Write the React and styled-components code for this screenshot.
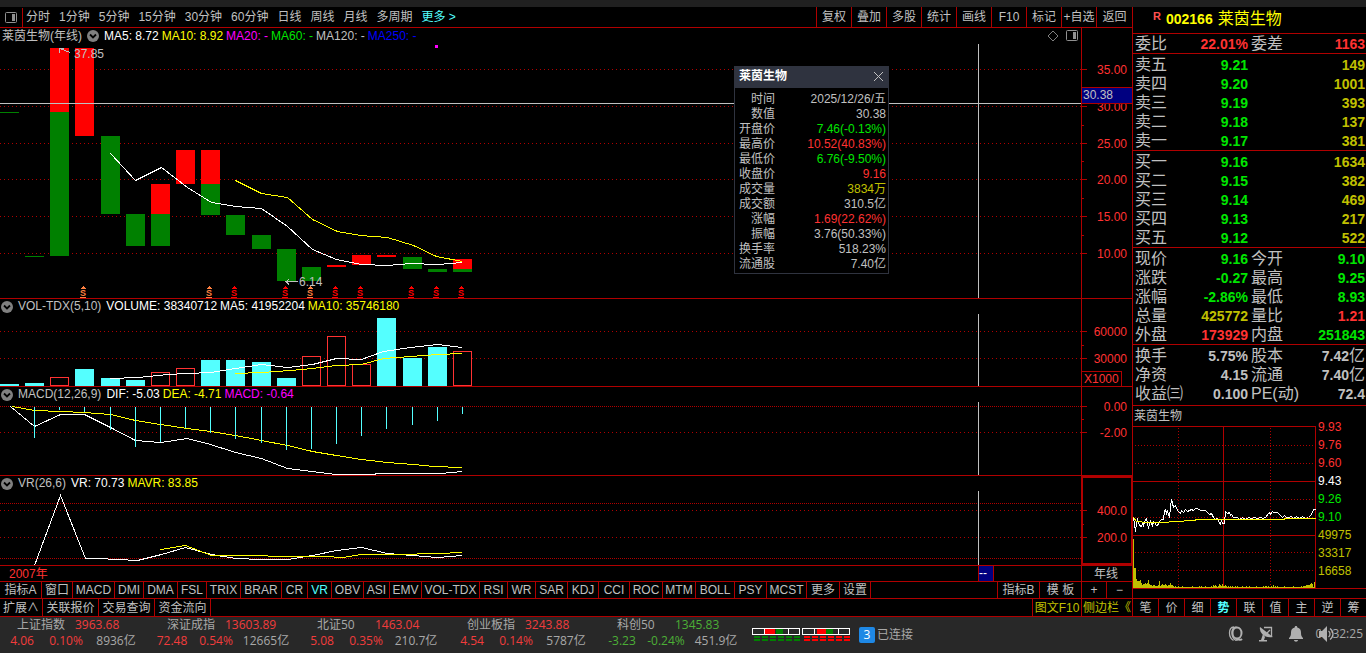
import React from 'react';
import styled, { createGlobalStyle, css } from 'styled-components';

const colors = {
  line: '#b00000',
  red: '#ff3232',
  green: '#00e600',
  grey: '#c0c0c0',
  olive: '#c0c000',
  yellow: '#ffff00',
  cyan: '#54ffff',
  white: '#ffffff',
  magenta: '#ff00ff',
};

const GlobalStyle = createGlobalStyle`
  * {
    box-sizing: border-box;
  }

  body {
    margin: 0;
    background: #000;
    color: ${colors.grey};
    font-family: "Liberation Sans", "Noto Sans CJK SC", sans-serif;
    font-size: 12px;
  }

  button {
    margin: 0;
    padding: 0;
    border: none;
    background: none;
    color: inherit;
    font: inherit;
    white-space: nowrap;
    cursor: pointer;
  }
`;

const Page = styled.div`
  display: flex;
  flex-direction: column;
  min-height: 100vh;
`;

const TopStrip = styled.div`
  height: 7px;
  background: #202020;
`;

const Body = styled.div`
  display: flex;
  flex: 1;
`;

const Main = styled.main`
  flex: 1;
  min-width: 0;
`;

const Bar = styled.div`
  display: flex;
  height: ${({ $height }) => $height}px;
  border-bottom: 1px solid ${colors.line};
  white-space: nowrap;
`;

const Spacer = styled.div`
  flex: 1;
`;

const LayoutButton = styled.button`
  display: flex;
  align-items: center;
  justify-content: center;
  width: 23px;
  margin-top: 1px;
  border-right: 1px solid ${colors.line};
`;

const Periods = styled.nav`
  display: flex;
  gap: 9px;
  padding-left: 3px;

  button {
    line-height: 20px;
  }
`;

const MoreButton = styled.button`
  color: ${colors.cyan};
`;

const Tools = styled.div`
  display: flex;

  button {
    width: 35px;
    line-height: 20px;
    border-left: 1px solid ${colors.line};
  }

  button:last-child {
    width: 36px;
  }
`;

const ChartRow = styled.section`
  display: flex;
  position: relative;
  border-bottom: 1px solid ${colors.line};
`;

const ChartArea = styled.div`
  flex: 1;
  min-width: 0;
`;

const ChartHeader = styled.div`
  display: flex;
  align-items: center;
  gap: 3px;
  height: ${({ $height }) => $height || 15}px;
  padding-left: ${({ $inset }) => $inset || 1}px;
  padding-right: 3px;
  line-height: 15px;
  white-space: nowrap;
`;

const ChartName = styled.span`
  margin-right: 2px;
`;

const Fold = styled.button`
  display: flex;
  margin-right: 2px;
`;

const Reading = styled.span`
  color: ${({ $color }) => $color};
`;

const Plot = styled.svg`
  display: block;
  width: 100%;
  height: ${({ $height }) => $height}px;
  shape-rendering: crispEdges;
`;

const Axis = styled.svg`
  display: block;
  flex: none;
  width: 51px;
  height: ${({ $height }) => $height}px;
  shape-rendering: crispEdges;
  overflow: visible;
`;

const HeaderIcons = styled.div`
  display: flex;
  gap: 7px;
  margin-left: auto;
`;

const Popup = styled.aside`
  position: absolute;
  left: 734px;
  top: 38px;
  width: 155px;
  border: 1px solid #2f333f;
  background: #000;
`;

const PopupTitle = styled.header`
  display: flex;
  align-items: center;
  justify-content: space-between;
  height: 21px;
  padding: 0 4px 3px;
  background: #2f333f;
  color: ${colors.white};
  font-weight: bold;
  line-height: 16px;
`;

const CloseButton = styled.button`
  display: flex;
`;

const PopupTable = styled.table`
  width: 100%;
  margin: 4px 0 1px;
  border-collapse: collapse;
  line-height: 15px;

  th,
  td {
    height: 15px;
    padding: 0 2px 0 0;
    text-align: right;
    font-weight: normal;
    white-space: nowrap;
  }

  th {
    width: 40px;
    padding: 0;
  }
`;

const Tab = styled.button`
  width: ${({ $width }) => $width}px;
  border-right: 1px solid ${colors.line};
  color: ${({ $color }) => $color || 'inherit'};
  line-height: 16px;
`;

const SideTab = styled.button`
  width: ${({ $width }) => $width}px;
  border-left: 1px solid ${colors.line};
  color: ${({ $color }) => $color || 'inherit'};
  line-height: 16px;
`;

const Side = styled.aside`
  display: flex;
  flex-direction: column;
  flex: none;
  width: 234px;
  border-left: 1px solid ${colors.line};
`;

const StockTitle = styled.h1`
  display: flex;
  align-items: center;
  gap: 5px;
  height: 26px;
  margin: 0;
  padding: 0 0 2px 20px;
  color: ${colors.yellow};
  font-size: 16px;
  font-weight: normal;
  line-height: 24px;

  sup {
    align-self: flex-start;
    margin-top: 3px;
    color: #ff5050;
    font-size: 11px;
    font-weight: bold;
    line-height: 12px;
  }

  b {
    font-size: 14px;
  }
`;

const QuoteTable = styled.table`
  width: 100%;
  table-layout: fixed;
  border-collapse: collapse;

  th,
  td {
    height: 19px;
    padding: 0;
    line-height: 16px;
    white-space: nowrap;
  }

  th {
    width: 50px;
    padding-left: 2px;
    font-size: 16px;
    font-weight: normal;
    text-align: left;
  }

  td {
    padding-right: 1px;
    font-size: 14px;
    font-weight: bold;
    text-align: right;
  }

  th + td {
    width: 66px;
  }

  td:last-child {
    width: auto;
  }
`;

const QuoteBlock = styled.div`
  padding: ${({ $pad }) => $pad || '1px 0 0'};
  border-top: 1px solid ${colors.line};
`;

const Value = styled.td`
  color: ${({ $color }) => $color};

  small {
    font-size: 16px;
    font-weight: normal;
    line-height: 14px;
  }
`;

const MiniTitle = styled.h2`
  height: 21px;
  margin: 0;
  padding-left: 1px;
  border-top: 1px solid ${colors.line};
  font-size: 12px;
  font-weight: normal;
  line-height: 20px;
`;

const MiniPlot = styled.svg`
  display: block;
  width: 100%;
  height: 172px;
  overflow: visible;
  shape-rendering: crispEdges;
`;

const SideTabs = styled.nav`
  display: flex;
  height: 19px;
  border: solid ${colors.line};
  border-width: 1px 0;

  button {
    flex: 1;
    border-right: 1px solid ${colors.line};
  }

  button:last-child {
    border-right: none;
  }
`;

const SideTabButton = styled.button`
  line-height: 16px;
  ${({ $active }) =>
    $active &&
    css`
      color: ${colors.cyan};
      font-weight: bold;
    `}
`;

const Footer = styled.footer`
  display: flex;
  align-items: center;
  height: 36px;
  background: #282828;
  color: #a8a8a8;
  font-family: "Open Sans", "Noto Sans CJK SC", sans-serif;
  white-space: nowrap;
`;

const IndexCard = styled.div`
  width: 150px;
  padding-bottom: 4px;
  line-height: 16px;
`;

const IndexName = styled.div`
  display: grid;
  grid-template-columns: 58px 1fr;
  height: 16px;
  padding-left: 17px;
`;

const IndexChange = styled.div`
  display: grid;
  grid-template-columns: 44px 44px 56px;
  height: 16px;
  text-align: center;
`;

const Trend = styled.span`
  color: ${({ $up }) => ($up ? '#f23c3c' : '#4caf36')};
`;

const Meters = styled.svg`
  flex: none;
  width: 99px;
  height: 14px;
  margin-left: 2px;
  shape-rendering: crispEdges;
`;

const Connection = styled.div`
  display: flex;
  align-items: center;
  gap: 2px;
  margin-left: 8px;
  line-height: 16px;

  b {
    width: 16px;
    border-radius: 2px;
    background: #1e88e5;
    color: ${colors.white};
    font-weight: normal;
    text-align: center;
  }
`;

const StatusIcons = styled.div`
  display: flex;
  align-items: center;
  gap: 14px;
  margin-left: auto;
  padding: 0 3px 2px 0;

  button {
    display: flex;
  }
`;

const Clock = styled.div`
  position: relative;
  margin-left: -2px;
  line-height: 16px;

  button {
    position: absolute;
    left: 2px;
    top: 0;
  }
`;

const periods = ['分时', '1分钟', '5分钟', '15分钟', '30分钟', '60分钟', '日线', '周线', '月线', '多周期'];
const tools = ['复权', '叠加', '多股', '统计', '画线', 'F10', '标记', '+自选', '返回'];
const indicators = [
  ['指标A', 42], ['窗口', 31], ['MACD', 42], ['DMI', 29], ['DMA', 34], ['FSL', 29], ['TRIX', 34],
  ['BRAR', 41], ['CR', 26], ['VR', 24], ['OBV', 32], ['ASI', 26], ['EMV', 32], ['VOL-TDX', 58],
  ['RSI', 28], ['WR', 28], ['SAR', 32], ['KDJ', 31], ['CCI', 31], ['ROC', 33], ['MTM', 33],
  ['BOLL', 39], ['PSY', 32], ['MCST', 40], ['更多', 33], ['设置', 31],
];

// x, top, bottom, colour
const candles = [
  [0, 68, 69, 'g'], [25, 212, 213, 'g'], [50, 4, 68, 'r'], [50, 68, 212, 'g'], [75, 4, 92, 'r'],
  [101, 92, 170, 'g'], [126, 170, 202, 'g'], [151, 140, 170, 'r'], [151, 170, 202, 'g'],
  [176, 106, 140, 'r'], [201, 106, 140, 'r'], [201, 140, 171, 'g'], [226, 171, 191, 'g'],
  [252, 191, 205, 'g'], [277, 205, 237, 'g'], [302, 223, 237, 'g'], [327, 221, 223, 'r'],
  [352, 211, 221, 'r'], [377, 211, 213, 'r'], [403, 213, 225, 'g'], [428, 225, 228, 'g'],
  [453, 215, 225, 'r'], [453, 225, 228, 'g'],
];

const signals = [
  [83, '#ff8040'], [209, '#ff8040'], [234, '#ff0000'], [285, '#ff0000'], [310, '#ff8040'],
  [335, '#ff0000'], [360, '#ff0000'], [411, '#ff0000'], [436, '#ff0000'], [461, '#ff0000'],
];

// x, top, rising
const volumes = [
  [0, 70, 0], [25, 69, 0], [50, 63, 1], [75, 55, 0], [101, 64, 0], [126, 66, 0], [151, 58, 1],
  [176, 54, 1], [201, 46, 0], [226, 46, 0], [252, 48, 0], [277, 64, 0], [302, 42, 1], [327, 22, 1],
  [352, 50, 1], [377, 4, 0], [403, 44, 0], [428, 33, 0], [453, 37, 1],
];

const macdBars = [
  [34, 36], [59, 8], [84, 10], [110, 28], [135, 45], [160, 40], [185, 26], [210, 31], [235, 37],
  [261, 41], [286, 48], [311, 47], [336, 42], [361, 34], [386, 27], [412, 23], [437, 19], [462, 12],
];

const popupRows = [
  ['时间', '2025/12/26/五'],
  ['数值', '30.38'],
  ['开盘价', '7.46(-0.13%)', colors.green],
  ['最高价', '10.52(40.83%)', colors.red],
  ['最低价', '6.76(-9.50%)', colors.green],
  ['收盘价', '9.16', colors.red],
  ['成交量', '3834万', colors.olive],
  ['成交额', '310.5亿'],
  ['涨幅', '1.69(22.62%)', colors.red],
  ['振幅', '3.76(50.33%)'],
  ['换手率', '518.23%'],
  ['流通股', '7.40亿'],
];

const asks = [
  ['卖五', '9.21', '149'], ['卖四', '9.20', '1001'], ['卖三', '9.19', '393'],
  ['卖二', '9.18', '137'], ['卖一', '9.17', '381'],
];
const bids = [
  ['买一', '9.16', '1634'], ['买二', '9.15', '382'], ['买三', '9.14', '469'],
  ['买四', '9.13', '217'], ['买五', '9.12', '522'],
];

const quotes = [
  ['现价', '9.16', colors.green, '今开', '9.10', colors.green],
  ['涨跌', '-0.27', colors.green, '最高', '9.25', colors.green],
  ['涨幅', '-2.86%', colors.green, '最低', '8.93', colors.green],
  ['总量', '425772', colors.olive, '量比', '1.21', colors.red],
  ['外盘', '173929', colors.red, '内盘', '251843', colors.green],
];

const indices = [
  ['上证指数', '3963.68', '4.06', '0.10%', '8936亿', true],
  ['深证成指', '13603.89', '72.48', '0.54%', '12665亿', true],
  ['北证50', '1463.04', '5.08', '0.35%', '210.7亿', true],
  ['创业板指', '3243.88', '4.54', '0.14%', '5787亿', true],
  ['科创50', '1345.83', '-3.23', '-0.24%', '451.9亿', false],
];

const miniVolumes = [
  49, 20, 20, 9, 7, 7, 7, 8, 5, 3, 4, 4, 5, 4, 5, 8, 4, 3, 3, 2, 3, 3, 2, 2, 2, 3, 7, 2, 3, 4, 3, 3,
  4, 3, 2, 3, 3, 5, 3, 3, 2, 1, 2, 1, 1, 2, 1, 1, 1, 2, 1, 1, 1, 1, 1, 1, 1, 1, 1, 2, 1, 1, 1, 1, 1,
  1, 2, 1, 2, 1, 1, 1, 2, 1, 1, 1, 1, 1, 2, 1, 3, 2, 3, 2, 1, 2, 4, 3, 2, 4, 2, 2, 3, 2, 1, 2, 1, 2,
  1, 2, 1, 1, 2, 1, 2, 1, 1, 1, 1, 2, 1, 1, 1, 2, 1, 1, 2, 1, 1, 1, 1, 1, 1, 2, 1, 1, 1, 1, 1, 1, 2,
  1, 2, 2, 1, 2, 1, 1, 2, 1, 3, 1, 2, 1, 2, 1, 1, 1, 1, 1, 1, 2, 1, 1, 1, 1, 1, 1, 1, 1, 2, 1, 1, 1,
  1, 1, 1, 1, 2, 1, 2, 2, 2, 3, 3, 3, 3, 4, 5, 4, 1, 6,
];

const miniLabels = [
  ['9.93', colors.red], ['9.76', colors.red], ['9.60', colors.red], ['9.43', colors.white],
  ['9.26', colors.green], ['9.10', colors.green], ['49975', colors.olive], ['33317', colors.olive],
  ['16658', colors.olive],
];

const GridLine = ({ y, dense }) => (
  <line x1="0" x2="100%" y1={y + 0.5} y2={y + 0.5} stroke={colors.line} strokeDasharray={dense ? '1 1' : '1 3'} />
);

const Curve = ({ points, color = colors.white }) => (
  <polyline points={points} transform="translate(0.5 0.5)" fill="none" stroke={color} />
);

const Cursor = ({ height }) => <rect x="978" y="0" width="1" height={height} fill={colors.grey} />;

const ScaleLabel = ({ y, children }) => (
  <>
    <rect x="1" y={y} width="5" height="1" fill={colors.line} />
    <text x="46" y={y + 5} fill={colors.red} textAnchor="end">{children}</text>
  </>
);

const Scale = ({ height, labels, minor = [], children }) => (
  <Axis $height={height}>
    <rect width="1" height={height} fill={colors.line} />
    {minor.map(y => <rect key={y} x="1" y={y} width="2" height="1" fill={colors.line} />)}
    {labels.map(([y, text]) => <ScaleLabel key={text} y={y}>{text}</ScaleLabel>)}
    {children}
  </Axis>
);

const PanelIcon = () => (
  <svg width="12" height="12" viewBox="0 0 12 12" fill="none">
    <rect x="0.5" y="0.5" width="11" height="10" rx="1" stroke="#909090" />
    <rect x="7" y="2" width="3" height="7" fill="#909090" />
  </svg>
);

const FoldButton = () => (
  <Fold aria-label="收起">
    <svg width="12" height="12" viewBox="0 0 12 12">
      <circle cx="6" cy="6" r="6" fill="#808080" />
      <path d="M3 4.5l3 3 3-3" fill="none" stroke="#000" strokeWidth="1.8" />
    </svg>
  </Fold>
);

const PriceChart = () => (
  <ChartRow>
    <ChartArea>
      <ChartHeader $height={16} $inset={2}>
        <ChartName>莱茵生物(年线)</ChartName>
        <FoldButton />
        <Reading $color={colors.white}>MA5: 8.72</Reading>
        <Reading $color={colors.yellow}>MA10: 8.92</Reading>
        <Reading $color={colors.magenta}>MA20: -</Reading>
        <Reading $color={colors.green}>MA60: -</Reading>
        <Reading $color={colors.grey}>MA120: -</Reading>
        <Reading $color="#0000ff">MA250: -</Reading>
        <HeaderIcons>
          <svg width="12" height="12" viewBox="0 0 12 12">
            <path d="M6 1l5 5-5 5-5-5z" fill="none" stroke="#808080" />
          </svg>
          <PanelIcon />
        </HeaderIcons>
      </ChartHeader>
      <Plot $height={254}>
        {[25, 62, 99, 135, 172, 209].map(y => <GridLine key={y} y={y} />)}
        {candles.map(([x, top, bottom, tone]) => (
          <rect key={`${x}-${top}`} x={x} y={top} width="19" height={bottom - top} fill={tone === 'r' ? '#ff0000' : '#008000'} />
        ))}
        <Curve points="110,109 135,136 161,123 187,143 211,158 235,162 261,164 287,182 312,205 336,215 361,220 387,221 410,219 437,220 462,218" />
        <Curve color={colors.yellow} points="235,136 261,149 287,153 312,175 337,187 360,191 387,193 413,201 436,212 462,217" />
        <path d="M59.5 4.5h4m-4 0v4m0-4l11 4" fill="none" stroke={colors.grey} />
        <text x="74" y="14" fill={colors.grey}>37.85</text>
        <path d="M298 237.5h-12m3-2l-3 2 3 3" fill="none" stroke={colors.grey} />
        <text x="299" y="242" fill={colors.grey}>6.14</text>
        <rect x="435" y="1" width="3" height="3" fill={colors.magenta} />
        {signals.map(([x, fill]) => (
          <g key={x} fill={fill}>
            <path d={`M${x} 242l3 3h-6z`} />
            <text x={x} y="252" fontSize="9" fontWeight="bold" textAnchor="middle">S</text>
            <rect x={x - 3} y="253" width="6" height="1" />
          </g>
        ))}
        <rect x="0" y="59" width="100%" height="1" fill={colors.grey} />
        <Cursor height={254} />
      </Plot>
    </ChartArea>
    <Scale
      height={270}
      minor={[97, 133, 170, 207]}
      labels={[[41, '35.00'], [78, '30.00'], [115, '25.00'], [151, '20.00'], [188, '15.00'], [225, '10.00']]}
    >
      <rect x="1" y="59" width="50" height="17" fill={colors.line} />
      <rect x="1" y="60" width="50" height="15" fill="#000080" />
      <text x="2" y="71" fill={colors.grey}>30.38</text>
    </Scale>
    <Popup>
      <PopupTitle>
        莱茵生物
        <CloseButton aria-label="关闭">
          <svg width="11" height="11" viewBox="0 0 11 11">
            <path d="M1 1l9 9m0-9l-9 9" stroke="#c0c0c0" />
          </svg>
        </CloseButton>
      </PopupTitle>
      <PopupTable>
        <tbody>
          {popupRows.map(([label, value, color]) => (
            <tr key={label}>
              <th scope="row">{label}</th>
              <td><Reading $color={color || colors.grey}>{value}</Reading></td>
            </tr>
          ))}
        </tbody>
      </PopupTable>
    </Popup>
  </ChartRow>
);

const VolumeChart = () => (
  <ChartRow>
    <ChartArea>
      <ChartHeader>
        <FoldButton />
        <ChartName>VOL-TDX(5,10)</ChartName>
        <Reading $color={colors.white}>VOLUME: 38340712</Reading>
        <Reading $color={colors.white}>MA5: 41952204</Reading>
        <Reading $color={colors.yellow}>MA10: 35746180</Reading>
      </ChartHeader>
      <Plot $height={72}>
        <GridLine y={17} />
        <GridLine y={44} />
        {volumes.map(([x, top, rising]) =>
          rising ? (
            <rect key={x} x={x + 0.5} y={top + 0.5} width="18" height={71 - top} fill="#000" stroke={colors.red} />
          ) : (
            <rect key={x} x={x} y={top} width="19" height={72 - top} fill={colors.cyan} />
          )
        )}
        <Curve points="110,64 138,63 167,60 187,59 210,58 235,54 261,50 287,53 312,50 336,44 361,45 383,37 410,33 437,30 462,33" />
        <Curve color={colors.yellow} points="235,59 261,58 290,56 312,54 336,51 361,50 383,44 410,42 437,40 462,39" />
        <Cursor height={72} />
      </Plot>
    </ChartArea>
    <Scale height={87} minor={[46]} labels={[[32, '60000'], [59, '30000']]}>
      <path d="M1 72.5h39.5V87" fill="none" stroke={colors.line} />
      <text x="3" y="84" fill={colors.red}>X1000</text>
    </Scale>
  </ChartRow>
);

const MacdChart = () => (
  <ChartRow>
    <ChartArea>
      <ChartHeader>
        <FoldButton />
        <ChartName>MACD(12,26,9)</ChartName>
        <Reading $color={colors.white}>DIF: -5.03</Reading>
        <Reading $color={colors.yellow}>DEA: -4.71</Reading>
        <Reading $color={colors.magenta}>MACD: -0.64</Reading>
      </ChartHeader>
      <Plot $height={73}>
        <GridLine y={4} dense />
        <GridLine y={30} />
        <Curve points="10,4 34,24 60,12 84,12 110,25 135,38 160,40 187,36 210,42 235,50 261,56 287,66 312,69 335,72 373,72 377,71 440,71 462,69" />
        <Curve color={colors.yellow} points="12,4 34,8 60,9 84,10 110,12 135,18 160,22 187,26 210,29 235,33 261,38 287,43 312,49 336,53 361,57 387,60 413,62 433,64 462,65" />
        {macdBars.map(([x, bottom]) => (
          <rect key={x} x={x} y="5" width="1" height={bottom - 5} fill={colors.cyan} />
        ))}
        <Cursor height={73} />
      </Plot>
    </ChartArea>
    <Scale height={88} minor={[32]} labels={[[19, '0.00'], [45, '-2.00']]} />
  </ChartRow>
);

const VrChart = () => (
  <ChartRow>
    <ChartArea>
      <ChartHeader>
        <FoldButton />
        <ChartName>VR(26,6)</ChartName>
        <Reading $color={colors.white}>VR: 70.73</Reading>
        <Reading $color={colors.yellow}>MAVR: 83.85</Reading>
      </ChartHeader>
      <Plot $height={74}>
        <GridLine y={12} dense />
        <GridLine y={19} />
        <GridLine y={46} />
        <GridLine y={67} dense />
        <Curve points="34,74 60,4 85,67 97,67 137,69 161,63 185,56 211,63 235,67 261,68 287,68 312,64 336,59 361,56 387,62 437,66 462,64" />
        <Curve color={colors.yellow} points="160,58 185,54 211,64 323,65 343,66 360,63 397,63 437,62 462,61" />
        <Cursor height={74} />
      </Plot>
    </ChartArea>
    <Scale height={89} minor={[48]} labels={[[34, '400.0'], [61, '200.0']]}>
      <rect x="1" y="1" width="50" height="87" fill="none" stroke={colors.line} strokeWidth="2" />
    </Scale>
  </ChartRow>
);

const TimeAxis = () => (
  <ChartRow>
    <ChartArea>
      <Plot $height={15}>
        <text x="9" y="12" fill={colors.red}>2007年</text>
        <rect x="978" y="0" width="16" height="15" fill={colors.line} />
        <rect x="979" y="0" width="14" height="15" fill="#000080" />
        <text x="979" y="11" fill={colors.white}>--</text>
      </Plot>
    </ChartArea>
    <Scale height={15} labels={[]}>
      <text x="25" y="12" fill={colors.grey} textAnchor="middle">年线</text>
    </Scale>
  </ChartRow>
);

const OrderRows = ({ rows }) => (
  <QuoteBlock>
    <QuoteTable>
      <tbody>
        {rows.map(([label, price, volume]) => (
          <tr key={label}>
            <th scope="row">{label}</th>
            <Value $color={colors.green}>{price}</Value>
            <Value $color={colors.olive}>{volume}</Value>
          </tr>
        ))}
      </tbody>
    </QuoteTable>
  </QuoteBlock>
);

const MiniChart = () => (
  <MiniPlot>
    {[19, 37, 73, 91, 126, 144].map(y => (
      <line key={y} x1="2" x2="182" y1={y + 0.5} y2={y + 0.5} stroke={colors.line} strokeDasharray="1 2" />
    ))}
    {[45, 137].map(x => (
      <line key={x} x1={x + 0.5} x2={x + 0.5} y1="2" y2="162" stroke={colors.line} strokeDasharray="1 2" />
    ))}
    <path d="M0 .5h182.5v162M0 55.5h182M0 109.5h182M90.5 0v162" fill="none" stroke={colors.line} />
    <rect x="0" y="162" width="100%" height="1" fill={colors.line} />
    {miniVolumes.map((h, i) => (
      <rect key={i} x={i} y={162 - h} width="1" height={h} fill={colors.olive} />
    ))}
    <Curve points="0,91 2,105 3,96 4,93 6,99 8,100 9,97 10,99 11,95 13,92 15,102 16,97 17,95 19,99 20,95 21,96 23,99 25,98 26,95 28,93 30,93 31,84 32,83 33,87 34,85 36,91 37,81 38,73 39,77 40,81 42,79 44,84 47,87 48,84 50,86 52,83 54,85 58,83 60,84 62,82 64,82 67,84 72,84 74,86 76,88 78,87 80,91 82,93 84,92 85,95 87,98 88,94 89,97 91,97 92,85 94,87 96,86 97,89 98,88 100,91 104,91 106,93 109,91 112,93 115,91 118,92 121,91 124,92 127,91 130,92 133,90 134,88 136,86 137,88 139,85 140,86 144,86 146,88 149,91 151,89 153,91 155,91 158,90 160,92 163,90 166,92 169,90 172,92 175,91 178,88 180,83 182,83" />
    <Curve color={colors.yellow} points="0,91 3,95 14,96 32,96 40,95 62,94 62,93 151,93 151,92 182,92" />
    {miniLabels.map(([text, fill], i) => (
      <text key={text} x="185" y={i * 18 + 5} fill={fill}>{text}</text>
    ))}
  </MiniPlot>
);

const Sidebar = () => (
  <Side>
    <StockTitle>
      <sup>R</sup>
      <b>002166</b>
      莱茵生物
    </StockTitle>
    <QuoteBlock $pad="0">
      <QuoteTable>
        <tbody>
          <tr>
            <th scope="row">委比</th>
            <Value $color={colors.red}>22.01%</Value>
            <th scope="row">委差</th>
            <Value $color={colors.red}>1163</Value>
          </tr>
        </tbody>
      </QuoteTable>
    </QuoteBlock>
    <OrderRows rows={asks} />
    <OrderRows rows={bids} />
    <QuoteBlock>
      <QuoteTable>
        <tbody>
          {quotes.map(([label, value, tone, label2, value2, tone2]) => (
            <tr key={label}>
              <th scope="row">{label}</th>
              <Value $color={tone}>{value}</Value>
              <th scope="row">{label2}</th>
              <Value $color={tone2}>{value2}</Value>
            </tr>
          ))}
        </tbody>
      </QuoteTable>
    </QuoteBlock>
    <QuoteBlock $pad="1px 0 2px">
      <QuoteTable>
        <tbody>
          <tr>
            <th scope="row">换手</th>
            <Value>5.75%</Value>
            <th scope="row">股本</th>
            <Value>7.42<small>亿</small></Value>
          </tr>
          <tr>
            <th scope="row">净资</th>
            <Value>4.15</Value>
            <th scope="row">流通</th>
            <Value>7.40<small>亿</small></Value>
          </tr>
          <tr>
            <th scope="row">收益㈢</th>
            <Value>0.100</Value>
            <th scope="row">PE(动)</th>
            <Value>72.4</Value>
          </tr>
        </tbody>
      </QuoteTable>
    </QuoteBlock>
    <MiniTitle>莱茵生物</MiniTitle>
    <MiniChart />
    <SideTabs>
      {['笔', '价', '细', '势', '联', '值', '主', '逆', '筹'].map(tab => (
        <SideTabButton key={tab} $active={tab === '势'}>{tab}</SideTabButton>
      ))}
    </SideTabs>
  </Side>
);

const MeterIcon = () => (
  <Meters>
    {[[0, 13, '#008000'], [50, 15, '#ff0000']].map(([x, split, tone]) => (
      <g key={x}>
        <rect x={x + 0.5} y="0.5" width="47" height="6" fill="none" stroke="#fff" />
        <rect x={x + split} y="1" width={x ? 9 : 10} height="5" fill="#ff0000" />
        <rect x={x + 24} y="1" width="7" height="5" fill="#008000" />
        <path d={`M${x + 12.5} 1v5M${x + 36.5} 1v5`} stroke="#fff" />
        {[0, 1, 2, 3, 4, 5].map(i => (
          <g key={i} fill={tone}>
            <rect x={x + 2 + i * 8} y="8" width="6" height="2" />
            <rect x={x + 2 + i * 8} y="11" width="6" height="2" />
          </g>
        ))}
      </g>
    ))}
  </Meters>
);

const StatusBar = () => (
  <Footer>
    {indices.map(([name, price, change, percent, amount, up]) => (
      <IndexCard key={name}>
        <IndexName>
          <span>{name}</span>
          <Trend $up={up}>{price}</Trend>
        </IndexName>
        <IndexChange>
          <Trend $up={up}>{change}</Trend>
          <Trend $up={up}>{percent}</Trend>
          <span>{amount}</span>
        </IndexChange>
      </IndexCard>
    ))}
    <MeterIcon />
    <Connection>
      <b>3</b>
      已连接
    </Connection>
    <StatusIcons>
      <button aria-label="客服">
        <svg width="16" height="16" viewBox="0 0 16 16" fill="none" stroke="#b0b0b0">
          <ellipse cx="9" cy="7" rx="4.5" ry="5.5" strokeWidth="2" />
          <path d="M6 1C2.5 1 1.5 4 1.5 7s1.5 6 4 7.500M8.500 1C5 1 4 4 4 7s1.500 6 4 7.500" strokeWidth="1.3" />
          <path d="M8 14.500c2-3 3.500 1 6-1.500" strokeWidth="2" />
        </svg>
      </button>
      <button aria-label="信号">
        <svg width="16" height="16" viewBox="0 0 16 16" fill="#b0b0b0">
          <path d="M2 1c-1 5 4 12 13 10z" />
          <path d="M5 8l2 3-1 3h3v1.500H1V14h2z" />
          <path d="M6 1.500h7.500V10" fill="none" stroke="#b0b0b0" strokeWidth="1.3" />
          <path d="M9 7l3-3" fill="none" stroke="#b0b0b0" strokeWidth="1.3" />
        </svg>
      </button>
      <button aria-label="消息">
        <svg width="16" height="16" viewBox="0 0 16 16" fill="#b0b0b0">
          <path d="M8 0c1 0 1.300.7 1.300 1.400C12 2 13 4 13 6.500c0 3 .5 4 2 5.500v1H1v-1c1.500-1.500 2-2.500 2-5.500C3 4 4 2 6.700 1.400 6.700.7 7 0 8 0zM6 14h4c0 2.300-4 2.300-4 0z" />
        </svg>
      </button>
      <Clock>
        09:32:25
        <button aria-label="声音">
          <svg width="16" height="16" viewBox="0 0 16 16">
            <rect x="3" y="3" width="10" height="11" fill="#282828" />
            <path d="M1 5h3l5-5v16l-5-5H1z" fill="#b0b0b0" />
            <path d="M10.500 5c2 1.500 2 4.500 0 6M12 2.500c4 3 4 8 0 11" fill="none" stroke="#b0b0b0" strokeWidth="1.3" />
          </svg>
        </button>
      </Clock>
    </StatusIcons>
  </Footer>
);

const App = () => (
  <Page>
    <GlobalStyle />
    <TopStrip />
    <Body>
      <Main>
        <Bar $height={21}>
          <LayoutButton aria-label="布局"><PanelIcon /></LayoutButton>
          <Periods>
            {periods.map(p => <button key={p}>{p}</button>)}
            <MoreButton>更多 &gt;</MoreButton>
          </Periods>
          <Spacer />
          <Tools>
            {tools.map(t => <button key={t}>{t}</button>)}
          </Tools>
        </Bar>
        <PriceChart />
        <VolumeChart />
        <MacdChart />
        <VrChart />
        <TimeAxis />
        <Bar $height={17}>
          {indicators.map(([name, width]) => (
            <Tab key={name} $width={width} $color={name === 'VR' ? colors.cyan : undefined}>{name}</Tab>
          ))}
          <Spacer />
          <SideTab $width={42}>指标B</SideTab>
          <SideTab $width={42}>模 板</SideTab>
          <SideTab $width={25}>+</SideTab>
          <SideTab $width={26}>−</SideTab>
        </Bar>
        <Bar $height={18}>
          <Tab $width={43}>扩展∧</Tab>
          <Tab $width={56}>关联报价</Tab>
          <Tab $width={56}>交易查询</Tab>
          <Tab $width={56}>资金流向</Tab>
          <Spacer />
          <SideTab $width={49} $color={colors.olive}>图文F10</SideTab>
          <SideTab $width={51} $color={colors.olive}>侧边栏《</SideTab>
        </Bar>
      </Main>
      <Sidebar />
    </Body>
    <StatusBar />
  </Page>
);

export default App;
